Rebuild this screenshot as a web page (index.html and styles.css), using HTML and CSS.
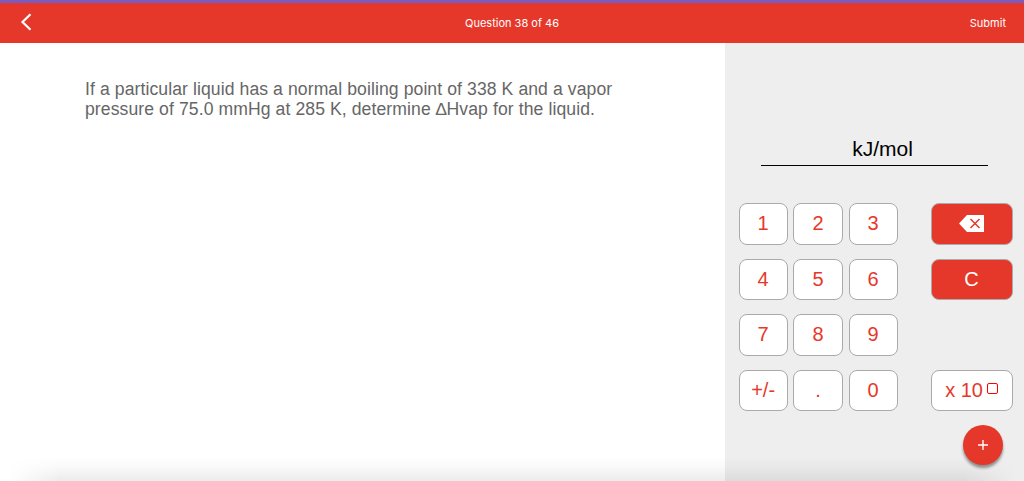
FILE: index.html
```html
<!DOCTYPE html>
<html lang="en">
<head>
    <meta charset="UTF-8">
    <meta name="viewport" content="width=device-width, initial-scale=1.0">
    <title>Question 38 of 46</title>
    <link rel="stylesheet" href="styles.css">
</head>
<body>
    <header class="topbar">
        <a class="back" aria-label="Back">
            <svg width="12" height="20" viewBox="0 0 12 20"><path d="M10.500 2.200 2.500 10l8 7.800" fill="none" stroke="#fff" stroke-width="2.200"/></svg>
        </a>
        <span class="title">Question 38 of 46</span>
        <a class="submit">Submit</a>
    </header>
    <main class="content">
        <section class="question">
            <p>If a particular liquid has a normal boiling point of 338 K and a vapor<br>pressure of 75.0 mmHg at 285 K, determine ∆Hvap for the liquid.</p>
        </section>
        <aside class="calculator">
            <div class="answer">kJ/mol</div>
            <div class="keypad">
                <button class="key">1</button>
                <button class="key">2</button>
                <button class="key">3</button>
                <button class="key red" aria-label="Backspace">
                    <svg width="25" height="17" viewBox="0 0 25 17"><path d="M8 0H25v17H8L0 8.500z" fill="#fff"/><path d="M11.500 4l9 9M20.500 4l-9 9" stroke="#e6382a" stroke-width="1.500"/></svg>
                </button>
                <button class="key">4</button>
                <button class="key">5</button>
                <button class="key">6</button>
                <button class="key red">C</button>
                <button class="key">7</button>
                <button class="key">8</button>
                <button class="key">9</button>
                <span></span>
                <button class="key">+/-</button>
                <button class="key">.</button>
                <button class="key">0</button>
                <button class="key">x 10<span class="exponent"></span></button>
            </div>
            <button class="add" aria-label="Add">
                <svg width="10" height="10" viewBox="0 0 10 10"><path d="M5 0v10M0 5h10" stroke="#fff" stroke-width="1.400"/></svg>
            </button>
        </aside>
    </main>
    <div class="bottom-shade"></div>
</body>
</html>
```
FILE: styles.css
```css
* {
    box-sizing: border-box;
}
body {
    margin: 0;
    height: 100vh;
    display: flex;
    flex-direction: column;
    background: #fff;
    font-family: "Liberation Sans", Arial, sans-serif;
}
.topbar {
    flex: none;
    height: 43px;
    display: grid;
    grid-template-columns: 1fr auto 1fr;
    align-items: center;
    padding: 0 18px 0 20px;
    border-top: 3px solid #7b5bbd;
    background: #e6382a;
    color: #fff;
    font-family: Inter, sans-serif;
    font-size: 11px;
}
.back {
    height: 20px;
    margin-top: -2px;
}
.back svg {
    display: block;
}
.title {
    margin-right: 2px;
}
.submit {
    text-align: right;
}
.content {
    flex: 1;
    display: flex;
}
.question {
    flex: 1;
    padding: 36px 0 0 85px;
    color: #666;
    font-size: 17.6px;
    letter-spacing: 0.085px;
    line-height: 20px;
    white-space: nowrap;
}
.question p {
    margin: 0;
}
.calculator {
    width: 299px;
    display: flex;
    flex-direction: column;
    background: #eee;
}
.answer {
    width: 227px;
    height: 37px;
    margin: 86px 0 0 36px;
    padding: 8px 0 0 16px;
    border-bottom: 1px solid #000;
    color: #000;
    font-size: 21px;
    line-height: 24px;
    text-align: center;
}
.keypad {
    display: grid;
    grid-template-columns: 49px 50px 49px auto;
    grid-template-rows: repeat(4, 41.5px);
    column-gap: 5.5px;
    row-gap: 14px;
    margin: 37px 0 0 13.6px;
}
.keypad > :nth-child(4n) {
    margin-left: 27.5px;
    width: 82px;
}
.key {
    display: flex;
    align-items: center;
    justify-content: center;
    padding: 0 0 1px;
    border: 1px solid #aaa;
    border-radius: 8px;
    background: #fff;
    color: #e6382a;
    font-family: inherit;
    font-size: 20px;
    line-height: 24px;
}
.red {
    background: #e6382a;
    color: #fff;
}
.exponent {
    width: 11px;
    height: 11px;
    margin: -3px 0 0 4px;
    border: 1px solid #f00;
    border-radius: 2px;
}
.add {
    width: 40px;
    height: 40px;
    margin: 13.5px 0 0 237.5px;
    display: flex;
    align-items: center;
    justify-content: center;
    padding: 0;
    border: 0;
    border-radius: 50%;
    background: #e6382a;
    box-shadow: 0 3px 3px rgba(0, 0, 0, 0.4);
}
/* soft shade along the bottom edge of the window */
.bottom-shade {
    position: absolute;
    left: 0;
    right: 0;
    bottom: 0;
    height: 24px;
    background: linear-gradient(rgba(0, 0, 0, 0), rgba(0, 0, 0, 0.025) 45%, rgba(0, 0, 0, 0.08));
    mask-image: linear-gradient(to right, transparent 8px, #000 60px, #000 calc(100% - 60px), transparent calc(100% - 8px));
    pointer-events: none;
}
```
